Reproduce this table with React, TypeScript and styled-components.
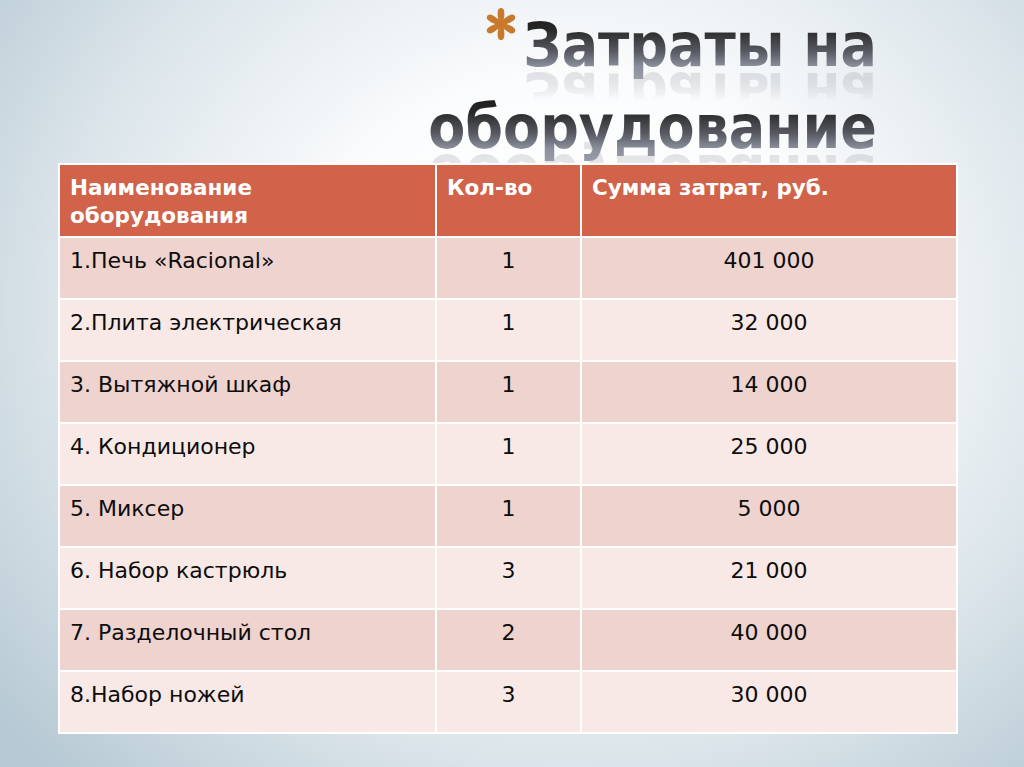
import React from 'react';
import styled, { createGlobalStyle } from 'styled-components';

const GlobalStyle = createGlobalStyle`
  html, body {
    margin: 0;
    padding: 0;
  }
  body {
    width: 1024px;
    height: 767px;
    overflow: hidden;
  }
`;

const rows = [
  { name: '1.Печь «Racional»', qty: '1', sum: '401 000' },
  { name: '2.Плита электрическая', qty: '1', sum: '32 000' },
  { name: '3. Вытяжной шкаф', qty: '1', sum: '14 000' },
  { name: '4. Кондиционер', qty: '1', sum: '25 000' },
  { name: '5. Миксер', qty: '1', sum: '5 000' },
  { name: '6. Набор кастрюль', qty: '3', sum: '21 000' },
  { name: '7. Разделочный стол', qty: '2', sum: '40 000' },
  { name: '8.Набор ножей', qty: '3', sum: '30 000' },
];

// orange six-armed bullet in front of the title
const Asterisk = () => (
  <BulletSvg viewBox="-17 -17 34 34" width="34" height="34">
    {[90, 30, -30, -90, 150, 210].map((a) => (
      <path
        key={a}
        d="M0 -1.5 C 4 -3, 12 -4.2, 14.5 -2.6 C 16.5 -1.2, 16.5 1.2, 14.5 2.6 C 12 4.2, 4 3, 0 1.5 Z"
        transform={`rotate(${-a})`}
        fill="#c9792c"
      />
    ))}
  </BulletSvg>
);

const App = () => {
  return (
    <>
      <GlobalStyle />
      <Slide>
        <TitleBlock>
          <TitleLine>
            <Asterisk />
            <TitleText>Затраты на</TitleText>
          </TitleLine>
          <TitleLine>
            <TitleText>оборудование</TitleText>
          </TitleLine>
        </TitleBlock>

        <Table>
          <colgroup>
            <col style={{ width: 375 }} />
            <col style={{ width: 143 }} />
            <col style={{ width: 374 }} />
          </colgroup>
          <thead>
            <tr>
              <HeadCell>
                Наименование
                <br />
                оборудования
              </HeadCell>
              <HeadCell>Кол-во</HeadCell>
              <HeadCell>Сумма затрат, руб.</HeadCell>
            </tr>
          </thead>
          <tbody>
            {rows.map((r, i) => (
              <Row key={r.name} $odd={i % 2 === 0}>
                <Cell>{r.name}</Cell>
                <Cell $center>{r.qty}</Cell>
                <Cell $center>{r.sum}</Cell>
              </Row>
            ))}
          </tbody>
        </Table>
      </Slide>
    </>
  );
};

const Slide = styled.div`
  width: 1024px;
  height: 767px;
  display: flex;
  flex-direction: column;
  background: radial-gradient(
    ellipse 72% 85% at 56% 40%,
    #ffffff 0%,
    #fbfcfd 35%,
    #dde6eb 68%,
    #b7c9d4 100%
  );
  overflow: hidden;
`;

const TitleBlock = styled.div`
  display: flex;
  flex-direction: column;
  align-items: flex-end;
  padding-top: 4px;
  padding-right: 147px;
  height: 159px;
`;

const TitleLine = styled.div`
  display: flex;
  align-items: flex-start;
  height: 82px;
`;

const BulletSvg = styled.svg`
  margin-top: 3px;
  margin-right: 5px;
  flex: none;
`;

const TitleText = styled.span`
  display: inline-block;
  font-family: 'DejaVu Sans Condensed', 'DejaVu Sans', sans-serif;
  font-stretch: condensed;
  font-weight: 700;
  font-size: 60px;
  line-height: 82px;
  white-space: nowrap;
  color: transparent;
  background: linear-gradient(
    180deg,
    #161616 0%,
    #262626 30%,
    #575a62 58%,
    #8a8f9b 76%,
    #9ea3ae 100%
  );
  -webkit-background-clip: text;
  background-clip: text;
  -webkit-box-reflect: below -33px
    linear-gradient(transparent 42%, rgba(0, 0, 0, 0.26) 80%);
`;

const Table = styled.table`
  position: relative;
  z-index: 1;
  width: 900px;
  margin-left: 58px;
  table-layout: fixed;
  border-collapse: separate;
  border-spacing: 2px;
  background: #ffffff;
  font-family: 'DejaVu Sans', 'Liberation Sans', sans-serif;
`;

const HeadCell = styled.th`
  height: 71px;
  padding: 9px 10px 0;
  box-sizing: border-box;
  vertical-align: top;
  text-align: left;
  background: #d0634a;
  color: #ffffff;
  font-size: 21.5px;
  font-weight: 700;
  line-height: 28px;
`;

const Row = styled.tr<{ $odd: boolean }>`
  background: ${(p) => (p.$odd ? '#efd3cf' : '#f8e9e7')};
`;

const Cell = styled.td<{ $center?: boolean }>`
  height: 60px;
  padding: 10px 10px 0;
  box-sizing: border-box;
  vertical-align: top;
  text-align: ${(p) => (p.$center ? 'center' : 'left')};
  color: #0d0d0d;
  font-size: 22px;
  line-height: 26px;
  white-space: nowrap;
`;

export default App;
